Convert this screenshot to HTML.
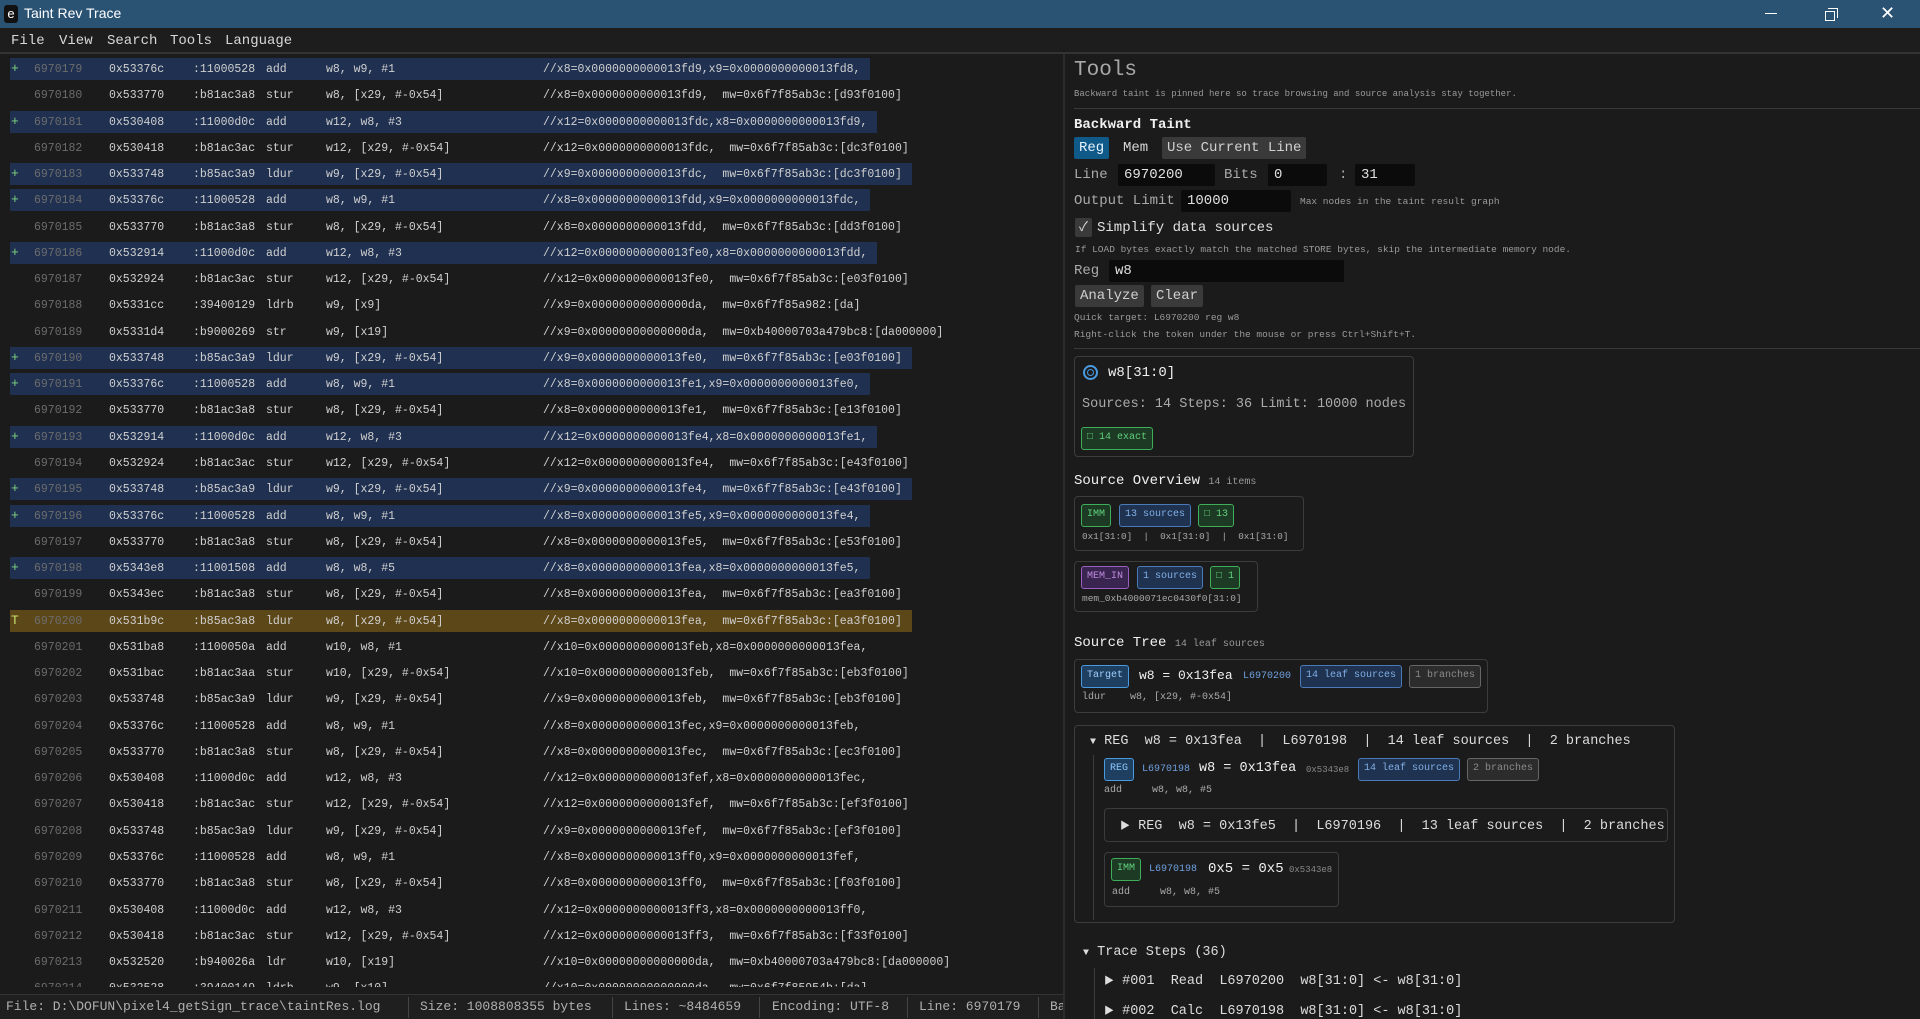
<!DOCTYPE html>
<html><head><meta charset="utf-8">
<style>
*{margin:0;padding:0;box-sizing:border-box}
html,body{width:1920px;height:1019px;overflow:hidden;background:#1b1b1b;color:#d0d0d0;font-family:"Liberation Mono","Noto Sans CJK SC",monospace}
.abs{position:absolute;white-space:pre}
#title{position:absolute;left:0;top:0;width:1920px;height:28px;background:#2a5273;}
#menu{position:absolute;left:0;top:28px;width:1920px;height:26px;background:#1d1d1d;border-bottom:2px solid #333}
#menu span{position:absolute;top:5px;font-size:14px;color:#d8d8d8}
#left{position:absolute;left:0;top:58px;width:1064px;height:929px;overflow:hidden}
.r{height:26.27px;white-space:pre;font-size:11.5px;line-height:22px}
.b{display:inline-block;margin-left:10px;height:22px;padding-right:10px}
.blue{background:#1f3050}
.yel{background:#5c4719}
.b span{display:inline-block}
.m{width:24px;color:#7fd47f;padding-left:1px;font-size:13px}
.n{width:75px;color:#6c6c6c}
.a{width:84px}.h{width:73px}.o{width:60px}.p{width:217px}
#split{position:absolute;left:1063px;top:54px;width:2px;height:965px;background:#2c2c2c}
#status{position:absolute;left:0;top:994px;width:1063px;height:25px;background:#1f1f1f;border-top:1px solid #333;font-size:13px;color:#b0b0b0}
#status span{position:absolute;top:4px}
#status i{position:absolute;top:2px;width:1px;height:21px;background:#444}
.g{color:#9a9a9a}
.inp{position:absolute;background:#0b0b0b;border-radius:2px;color:#e0e0e0;font-size:14px;padding-left:6px;line-height:22px}
.btn{position:absolute;border-radius:2px;font-size:14px;line-height:22px;padding:0 5px}
.box{position:absolute;border:1px solid #3c3c3c;border-radius:4px}
.bd{position:absolute;border:1.5px solid;border-radius:3px;font-size:10px;line-height:20px;padding:0 5px;height:23px;white-space:pre}
.gr{border-color:#3fae5a;background:#1c3a24;color:#62d07c}
.bl{border-color:#4a7ab8;background:#1f3350;color:#80aee6}
.gy{border-color:#666;background:#2c2c2c;color:#8a8a8a}
.pu{border-color:#9a5fc0;background:#3a2550;color:#c08ae0}
.tg{border-color:#4a9ae0;background:#1f3f60;color:#a0d0ff}
</style></head><body>
<div id="title">
 <div class="abs" style="left:4px;top:5px;width:14px;height:18px;background:#111;border-radius:3px;color:#fff;font-size:13px;line-height:17px;text-align:center;font-family:'Liberation Sans',sans-serif">e</div>
 <div class="abs" style="left:24px;top:5px;font-family:'Liberation Sans',sans-serif;font-size:14px;color:#fff">Taint Rev Trace</div>
 <div class="abs" style="left:1765px;top:13px;width:12px;height:1px;background:#fff"></div>
 <div class="abs" style="left:1825px;top:11px;width:10px;height:10px;border:1px solid #fff"></div>
 <div class="abs" style="left:1828px;top:8px;width:10px;height:10px;border-top:1px solid #fff;border-right:1px solid #fff"></div>
 <div class="abs" style="left:1880px;top:3px;font-family:'Liberation Sans',sans-serif;font-size:18px;color:#fff">✕</div>
</div>
<div id="menu"><span style="left:11px">File</span><span style="left:59px">View</span><span style="left:107px">Search</span><span style="left:170px">Tools</span><span style="left:225px">Language</span></div>

<div id="left">
<div class="r"><span class="b blue"><span class="m">+</span><span class="n">6970179</span><span class="a">0x53376c</span><span class="h">:11000528</span><span class="o">add</span><span class="p">w8, w9, #1</span>//x8=0x0000000000013fd9,x9=0x0000000000013fd8,</span></div>
<div class="r"><span class="b"><span class="m"> </span><span class="n">6970180</span><span class="a">0x533770</span><span class="h">:b81ac3a8</span><span class="o">stur</span><span class="p">w8, [x29, #-0x54]</span>//x8=0x0000000000013fd9,  mw=0x6f7f85ab3c:[d93f0100]</span></div>
<div class="r"><span class="b blue"><span class="m">+</span><span class="n">6970181</span><span class="a">0x530408</span><span class="h">:11000d0c</span><span class="o">add</span><span class="p">w12, w8, #3</span>//x12=0x0000000000013fdc,x8=0x0000000000013fd9,</span></div>
<div class="r"><span class="b"><span class="m"> </span><span class="n">6970182</span><span class="a">0x530418</span><span class="h">:b81ac3ac</span><span class="o">stur</span><span class="p">w12, [x29, #-0x54]</span>//x12=0x0000000000013fdc,  mw=0x6f7f85ab3c:[dc3f0100]</span></div>
<div class="r"><span class="b blue"><span class="m">+</span><span class="n">6970183</span><span class="a">0x533748</span><span class="h">:b85ac3a9</span><span class="o">ldur</span><span class="p">w9, [x29, #-0x54]</span>//x9=0x0000000000013fdc,  mw=0x6f7f85ab3c:[dc3f0100]</span></div>
<div class="r"><span class="b blue"><span class="m">+</span><span class="n">6970184</span><span class="a">0x53376c</span><span class="h">:11000528</span><span class="o">add</span><span class="p">w8, w9, #1</span>//x8=0x0000000000013fdd,x9=0x0000000000013fdc,</span></div>
<div class="r"><span class="b"><span class="m"> </span><span class="n">6970185</span><span class="a">0x533770</span><span class="h">:b81ac3a8</span><span class="o">stur</span><span class="p">w8, [x29, #-0x54]</span>//x8=0x0000000000013fdd,  mw=0x6f7f85ab3c:[dd3f0100]</span></div>
<div class="r"><span class="b blue"><span class="m">+</span><span class="n">6970186</span><span class="a">0x532914</span><span class="h">:11000d0c</span><span class="o">add</span><span class="p">w12, w8, #3</span>//x12=0x0000000000013fe0,x8=0x0000000000013fdd,</span></div>
<div class="r"><span class="b"><span class="m"> </span><span class="n">6970187</span><span class="a">0x532924</span><span class="h">:b81ac3ac</span><span class="o">stur</span><span class="p">w12, [x29, #-0x54]</span>//x12=0x0000000000013fe0,  mw=0x6f7f85ab3c:[e03f0100]</span></div>
<div class="r"><span class="b"><span class="m"> </span><span class="n">6970188</span><span class="a">0x5331cc</span><span class="h">:39400129</span><span class="o">ldrb</span><span class="p">w9, [x9]</span>//x9=0x00000000000000da,  mw=0x6f7f85a982:[da]</span></div>
<div class="r"><span class="b"><span class="m"> </span><span class="n">6970189</span><span class="a">0x5331d4</span><span class="h">:b9000269</span><span class="o">str</span><span class="p">w9, [x19]</span>//x9=0x00000000000000da,  mw=0xb40000703a479bc8:[da000000]</span></div>
<div class="r"><span class="b blue"><span class="m">+</span><span class="n">6970190</span><span class="a">0x533748</span><span class="h">:b85ac3a9</span><span class="o">ldur</span><span class="p">w9, [x29, #-0x54]</span>//x9=0x0000000000013fe0,  mw=0x6f7f85ab3c:[e03f0100]</span></div>
<div class="r"><span class="b blue"><span class="m">+</span><span class="n">6970191</span><span class="a">0x53376c</span><span class="h">:11000528</span><span class="o">add</span><span class="p">w8, w9, #1</span>//x8=0x0000000000013fe1,x9=0x0000000000013fe0,</span></div>
<div class="r"><span class="b"><span class="m"> </span><span class="n">6970192</span><span class="a">0x533770</span><span class="h">:b81ac3a8</span><span class="o">stur</span><span class="p">w8, [x29, #-0x54]</span>//x8=0x0000000000013fe1,  mw=0x6f7f85ab3c:[e13f0100]</span></div>
<div class="r"><span class="b blue"><span class="m">+</span><span class="n">6970193</span><span class="a">0x532914</span><span class="h">:11000d0c</span><span class="o">add</span><span class="p">w12, w8, #3</span>//x12=0x0000000000013fe4,x8=0x0000000000013fe1,</span></div>
<div class="r"><span class="b"><span class="m"> </span><span class="n">6970194</span><span class="a">0x532924</span><span class="h">:b81ac3ac</span><span class="o">stur</span><span class="p">w12, [x29, #-0x54]</span>//x12=0x0000000000013fe4,  mw=0x6f7f85ab3c:[e43f0100]</span></div>
<div class="r"><span class="b blue"><span class="m">+</span><span class="n">6970195</span><span class="a">0x533748</span><span class="h">:b85ac3a9</span><span class="o">ldur</span><span class="p">w9, [x29, #-0x54]</span>//x9=0x0000000000013fe4,  mw=0x6f7f85ab3c:[e43f0100]</span></div>
<div class="r"><span class="b blue"><span class="m">+</span><span class="n">6970196</span><span class="a">0x53376c</span><span class="h">:11000528</span><span class="o">add</span><span class="p">w8, w9, #1</span>//x8=0x0000000000013fe5,x9=0x0000000000013fe4,</span></div>
<div class="r"><span class="b"><span class="m"> </span><span class="n">6970197</span><span class="a">0x533770</span><span class="h">:b81ac3a8</span><span class="o">stur</span><span class="p">w8, [x29, #-0x54]</span>//x8=0x0000000000013fe5,  mw=0x6f7f85ab3c:[e53f0100]</span></div>
<div class="r"><span class="b blue"><span class="m">+</span><span class="n">6970198</span><span class="a">0x5343e8</span><span class="h">:11001508</span><span class="o">add</span><span class="p">w8, w8, #5</span>//x8=0x0000000000013fea,x8=0x0000000000013fe5,</span></div>
<div class="r"><span class="b"><span class="m"> </span><span class="n">6970199</span><span class="a">0x5343ec</span><span class="h">:b81ac3a8</span><span class="o">stur</span><span class="p">w8, [x29, #-0x54]</span>//x8=0x0000000000013fea,  mw=0x6f7f85ab3c:[ea3f0100]</span></div>
<div class="r"><span class="b yel"><span class="m" style="color:#c8e070">T</span><span class="n">6970200</span><span class="a">0x531b9c</span><span class="h">:b85ac3a8</span><span class="o">ldur</span><span class="p">w8, [x29, #-0x54]</span>//x8=0x0000000000013fea,  mw=0x6f7f85ab3c:[ea3f0100]</span></div>
<div class="r"><span class="b"><span class="m"> </span><span class="n">6970201</span><span class="a">0x531ba8</span><span class="h">:1100050a</span><span class="o">add</span><span class="p">w10, w8, #1</span>//x10=0x0000000000013feb,x8=0x0000000000013fea,</span></div>
<div class="r"><span class="b"><span class="m"> </span><span class="n">6970202</span><span class="a">0x531bac</span><span class="h">:b81ac3aa</span><span class="o">stur</span><span class="p">w10, [x29, #-0x54]</span>//x10=0x0000000000013feb,  mw=0x6f7f85ab3c:[eb3f0100]</span></div>
<div class="r"><span class="b"><span class="m"> </span><span class="n">6970203</span><span class="a">0x533748</span><span class="h">:b85ac3a9</span><span class="o">ldur</span><span class="p">w9, [x29, #-0x54]</span>//x9=0x0000000000013feb,  mw=0x6f7f85ab3c:[eb3f0100]</span></div>
<div class="r"><span class="b"><span class="m"> </span><span class="n">6970204</span><span class="a">0x53376c</span><span class="h">:11000528</span><span class="o">add</span><span class="p">w8, w9, #1</span>//x8=0x0000000000013fec,x9=0x0000000000013feb,</span></div>
<div class="r"><span class="b"><span class="m"> </span><span class="n">6970205</span><span class="a">0x533770</span><span class="h">:b81ac3a8</span><span class="o">stur</span><span class="p">w8, [x29, #-0x54]</span>//x8=0x0000000000013fec,  mw=0x6f7f85ab3c:[ec3f0100]</span></div>
<div class="r"><span class="b"><span class="m"> </span><span class="n">6970206</span><span class="a">0x530408</span><span class="h">:11000d0c</span><span class="o">add</span><span class="p">w12, w8, #3</span>//x12=0x0000000000013fef,x8=0x0000000000013fec,</span></div>
<div class="r"><span class="b"><span class="m"> </span><span class="n">6970207</span><span class="a">0x530418</span><span class="h">:b81ac3ac</span><span class="o">stur</span><span class="p">w12, [x29, #-0x54]</span>//x12=0x0000000000013fef,  mw=0x6f7f85ab3c:[ef3f0100]</span></div>
<div class="r"><span class="b"><span class="m"> </span><span class="n">6970208</span><span class="a">0x533748</span><span class="h">:b85ac3a9</span><span class="o">ldur</span><span class="p">w9, [x29, #-0x54]</span>//x9=0x0000000000013fef,  mw=0x6f7f85ab3c:[ef3f0100]</span></div>
<div class="r"><span class="b"><span class="m"> </span><span class="n">6970209</span><span class="a">0x53376c</span><span class="h">:11000528</span><span class="o">add</span><span class="p">w8, w9, #1</span>//x8=0x0000000000013ff0,x9=0x0000000000013fef,</span></div>
<div class="r"><span class="b"><span class="m"> </span><span class="n">6970210</span><span class="a">0x533770</span><span class="h">:b81ac3a8</span><span class="o">stur</span><span class="p">w8, [x29, #-0x54]</span>//x8=0x0000000000013ff0,  mw=0x6f7f85ab3c:[f03f0100]</span></div>
<div class="r"><span class="b"><span class="m"> </span><span class="n">6970211</span><span class="a">0x530408</span><span class="h">:11000d0c</span><span class="o">add</span><span class="p">w12, w8, #3</span>//x12=0x0000000000013ff3,x8=0x0000000000013ff0,</span></div>
<div class="r"><span class="b"><span class="m"> </span><span class="n">6970212</span><span class="a">0x530418</span><span class="h">:b81ac3ac</span><span class="o">stur</span><span class="p">w12, [x29, #-0x54]</span>//x12=0x0000000000013ff3,  mw=0x6f7f85ab3c:[f33f0100]</span></div>
<div class="r"><span class="b"><span class="m"> </span><span class="n">6970213</span><span class="a">0x532520</span><span class="h">:b940026a</span><span class="o">ldr</span><span class="p">w10, [x19]</span>//x10=0x00000000000000da,  mw=0xb40000703a479bc8:[da000000]</span></div>
<div class="r"><span class="b"><span class="m"> </span><span class="n">6970214</span><span class="a">0x532528</span><span class="h">:39400149</span><span class="o">ldrb</span><span class="p">w9, [x10]</span>//x10=0x00000000000000da,  mw=0x6f7f85954b:[da]</span></div>
</div>

<div id="status">
 <span style="left:6px">File: D:\DOFUN\pixel4_getSign_trace\taintRes.log</span><i style="left:408px"></i>
 <span style="left:420px">Size: 1008808355 bytes</span><i style="left:612px"></i>
 <span style="left:624px">Lines: ~8484659</span><i style="left:759px"></i>
 <span style="left:772px">Encoding: UTF-8</span><i style="left:907px"></i>
 <span style="left:919px">Line: 6970179</span><i style="left:1038px"></i>
 <span style="left:1050px">Ba</span>
</div>
<div id="split"></div>

<div class="abs g" style="left:1074px;top:59px;font-size:21px;color:#a8a8a8">Tools</div>
<div class="abs g" style="left:1074px;top:89px;font-size:9px">Backward taint is pinned here so trace browsing and source analysis stay together.</div>
<div class="abs" style="left:1074px;top:108px;width:846px;height:1px;background:#3a3a3a"></div>
<div class="abs" style="left:1074px;top:117px;font-size:14px;color:#f0f0f0;font-weight:bold">Backward Taint</div>
<div class="btn" style="left:1074px;top:137px;background:#0f5a88;color:#e8f4ff">Reg</div>
<div class="abs" style="left:1123px;top:140px;font-size:14px;color:#d8d8d8">Mem</div>
<div class="btn" style="left:1162px;top:137px;background:#3a3a3a;color:#d0d0d0">Use Current Line</div>
<div class="abs" style="left:1074px;top:167px;font-size:14px;color:#aaa">Line</div>
<div class="inp" style="left:1118px;top:164px;width:97px">6970200</div>
<div class="abs" style="left:1224px;top:167px;font-size:14px;color:#aaa">Bits</div>
<div class="inp" style="left:1268px;top:164px;width:59px">0</div>
<div class="abs" style="left:1339px;top:167px;font-size:14px;color:#aaa">:</div>
<div class="inp" style="left:1355px;top:164px;width:60px">31</div>
<div class="abs" style="left:1074px;top:193px;font-size:14px;color:#aaa">Output Limit</div>
<div class="inp" style="left:1181px;top:190px;width:110px">10000</div>
<div class="abs g" style="left:1300px;top:196px;font-size:9.5px">Max nodes in the taint result graph</div>
<div class="abs" style="left:1075px;top:218px;width:17px;height:19px;background:#3a3a3a;border-radius:2px;color:#ddd;font-size:13px;line-height:19px;text-align:center">✓</div>
<div class="abs" style="left:1097px;top:220px;font-size:14px;color:#e0e0e0">Simplify data sources</div>
<div class="abs g" style="left:1075px;top:244px;font-size:9.5px">If LOAD bytes exactly match the matched STORE bytes, skip the intermediate memory node.</div>
<div class="abs" style="left:1074px;top:263px;font-size:14px;color:#aaa">Reg</div>
<div class="inp" style="left:1109px;top:260px;width:235px">w8</div>
<div class="btn" style="left:1075px;top:285px;background:#3a3a3a;color:#d0d0d0">Analyze</div>
<div class="btn" style="left:1151px;top:285px;background:#3a3a3a;color:#d0d0d0">Clear</div>
<div class="abs g" style="left:1074px;top:312px;font-size:9.5px">Quick target: L6970200 reg w8</div>
<div class="abs g" style="left:1074px;top:329px;font-size:9.5px">Right-click the token under the mouse or press Ctrl+Shift+T.</div>
<div class="abs" style="left:1074px;top:348px;width:846px;height:1px;background:#3a3a3a"></div>

<div class="box" style="left:1074px;top:356px;width:340px;height:101px"></div>
<div class="abs" style="left:1083px;top:365px;width:15px;height:15px;border:2px solid #4a9ae0;border-radius:50%"></div>
<div class="abs" style="left:1087px;top:369px;width:7px;height:7px;border:1.5px solid #4a9ae0;border-radius:50%"></div>
<div class="abs" style="left:1108px;top:365px;font-size:14px;color:#f0f0f0">w8[31:0]</div>
<div class="abs" style="left:1082px;top:397px;font-size:13.5px;color:#aaa">Sources: 14 Steps: 36 Limit: 10000 nodes</div>
<div class="bd gr" style="left:1081px;top:427px">□ 14 exact</div>

<div class="abs" style="left:1074px;top:473px;font-size:14px;color:#f0f0f0">Source Overview <span style="font-size:10px;color:#999">14 items</span></div>
<div class="box" style="left:1074px;top:496px;width:230px;height:55px"></div>
<div class="bd gr" style="left:1081px;top:504px">IMM</div>
<div class="bd bl" style="left:1119px;top:504px">13 sources</div>
<div class="bd gr" style="left:1198px;top:504px">□ 13</div>
<div class="abs" style="left:1082px;top:531px;font-size:9.3px;color:#aaa">0x1[31:0]  |  0x1[31:0]  |  0x1[31:0]</div>
<div class="box" style="left:1074px;top:561px;width:184px;height:51px"></div>
<div class="bd pu" style="left:1081px;top:566px">MEM_IN</div>
<div class="bd bl" style="left:1137px;top:566px">1 sources</div>
<div class="bd gr" style="left:1210px;top:566px">□ 1</div>
<div class="abs" style="left:1082px;top:593px;font-size:9.5px;color:#aaa">mem_0xb4000071ec0430f0[31:0]</div>

<div class="abs" style="left:1074px;top:635px;font-size:14px;color:#f0f0f0">Source Tree <span style="font-size:10px;color:#999">14 leaf sources</span></div>
<div class="box" style="left:1074px;top:659px;width:414px;height:54px"></div>
<div class="bd tg" style="left:1081px;top:665px">Target</div>
<div class="abs" style="left:1139px;top:668px;font-size:13px;color:#f0f0f0">w8 = 0x13fea</div>
<div class="abs" style="left:1243px;top:671px;font-size:10px;color:#6fa0e0">L6970200</div>
<div class="bd bl" style="left:1300px;top:665px">14 leaf sources</div>
<div class="bd gy" style="left:1409px;top:665px">1 branches</div>
<div class="abs" style="left:1082px;top:692px;font-size:10px;color:#aaa">ldur    w8, [x29, #-0x54]</div>

<div class="box" style="left:1074px;top:725px;width:601px;height:198px"></div>
<div class="abs" style="left:1090px;top:734px;font-size:13.5px;color:#ddd"><span style="font-size:10px">▼</span> REG  w8 = 0x13fea  |  L6970198  |  14 leaf sources  |  2 branches</div>
<div class="abs" style="left:1093px;top:755px;width:1px;height:165px;background:#3c3c3c"></div>
<div class="bd tg" style="left:1104px;top:758px;color:#8cc8ff">REG</div>
<div class="abs" style="left:1142px;top:764px;font-size:10px;color:#6fa0e0">L6970198</div>
<div class="abs" style="left:1199px;top:761px;font-size:13.5px;color:#f0f0f0">w8 = 0x13fea</div>
<div class="abs" style="left:1306px;top:765px;font-size:9px;color:#888">0x5343e8</div>
<div class="bd bl" style="left:1358px;top:758px">14 leaf sources</div>
<div class="bd gy" style="left:1467px;top:758px">2 branches</div>
<div class="abs" style="left:1104px;top:785px;font-size:10px;color:#aaa">add     w8, w8, #5</div>
<div class="box" style="left:1104px;top:808px;width:564px;height:34px"></div>
<div class="abs" style="left:1120px;top:817px;font-size:13.5px;color:#ddd"><span style="font-size:10px">▶</span> REG  w8 = 0x13fe5  |  L6970196  |  13 leaf sources  |  2 branches</div>
<div class="box" style="left:1104px;top:852px;width:235px;height:55px"></div>
<div class="bd gr" style="left:1111px;top:858px">IMM</div>
<div class="abs" style="left:1149px;top:864px;font-size:10px;color:#6fa0e0">L6970198</div>
<div class="abs" style="left:1208px;top:861px;font-size:14px;color:#f0f0f0">0x5 = 0x5</div>
<div class="abs" style="left:1289px;top:865px;font-size:9px;color:#888">0x5343e8</div>
<div class="abs" style="left:1112px;top:887px;font-size:10px;color:#aaa">add     w8, w8, #5</div>

<div class="abs" style="left:1083px;top:945px;font-size:13.5px;color:#ddd"><span style="font-size:10px">▼</span> Trace Steps (36)</div>
<div class="abs" style="left:1094px;top:968px;width:1px;height:51px;background:#3c3c3c"></div>
<div class="abs" style="left:1104px;top:972px;font-size:13.5px;color:#ddd"><span style="font-size:10px">▶</span> #001  Read  L6970200  w8[31:0] &lt;- w8[31:0]</div>
<div class="abs" style="left:1104px;top:1002px;font-size:13.5px;color:#ddd"><span style="font-size:10px">▶</span> #002  Calc  L6970198  w8[31:0] &lt;- w8[31:0]</div>
</body></html>
